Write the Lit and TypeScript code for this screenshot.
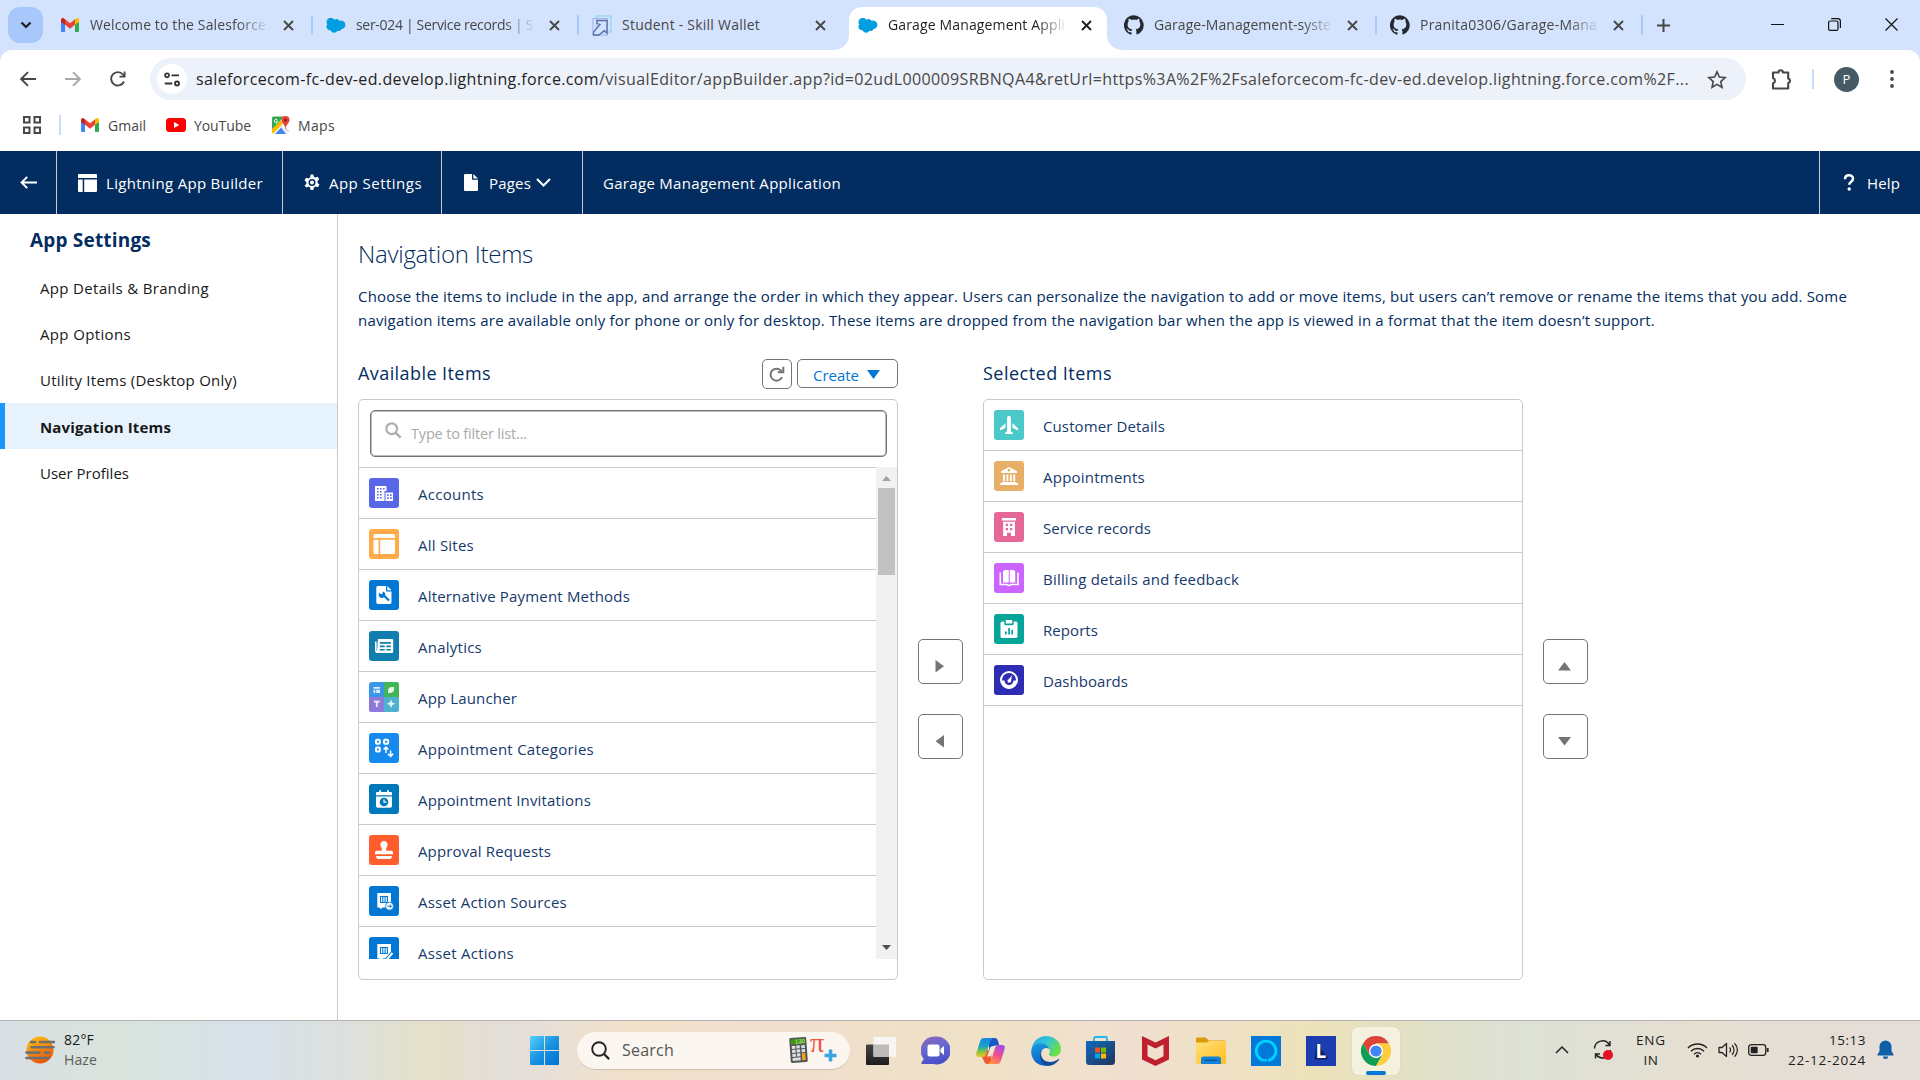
import { LitElement, html, css, svg, nothing } from "lit";
import { customElement } from "lit/decorators.js";

/* ---------- helpers ---------- */
const icon = (w: number, h: number, body: unknown, cls = "") =>
  html`<svg class="ic ${cls}" width=${w} height=${h} viewBox="0 0 ${w} ${h}">${body}</svg>`;

/* A text run; width is the advance the run should take, letter spacing follows from it. */
const run = (text: string, width: number, cls = "") =>
  html`<span class="run ${cls}" data-width=${width}>${text}</span>`;

/* ---------- brand marks ---------- */
const gmail = () => icon(18, 14, svg`
  <path fill="#4285f4" d="M0 3v9.800A1.200 1.200 0 0 0 1.200 14H4V5.500z"/>
  <path fill="#34a853" d="M14 14h2.800A1.200 1.200 0 0 0 18 12.800V3l-4 2.500z"/>
  <path fill="#ea4335" d="M4 6.800V1.300L9 5.200l5-3.900v5.500L9 10.700z"/>
  <path fill="#c5221f" d="M0 2.300V4L4 6.800V1.300L2.900.5C1.600-.5 0 .6 0 2.300z"/>
  <path fill="#fbbc04" d="M18 2.300V4l-4 2.800V1.300l1.100-.8C16.400-.5 18 .6 18 2.300z"/>`);

const cloud = () => icon(20, 15, svg`
  <path fill="#009ee0" d="M8.300 1.700A3.900 3.900 0 0 1 13.600 2.800 4.300 4.300 0 1 1 15.700 11.100 3.500 3.500 0 0 1 11.500 12.700 3.900 3.900 0 0 1 4.500 12.200 3.500 3.500 0 0 1 1.300 6.500 4.100 4.100 0 0 1 8.300 1.700z"/>`);

const wallet = () => icon(20, 21, svg`
  <rect x="4.500" y="1" width="14.500" height="16" fill="none" stroke="#8fdcf3" stroke-width="1.400"/>
  <rect x="1" y="3.500" width="14.500" height="16.500" fill="none" stroke="#9fb2ee" stroke-width="1"/>
  <path d="M5 5.500h10v12.500l-2.800-2.500L7 20H1.500v-3l6.500-7.500-3-1z" fill="#d3e3fd" stroke="#5a6aa3" stroke-width="1.300"/>`);

const github = () => icon(20, 20, svg`
  <path fill="#24292f" d="M10 .2a10 10 0 0 0-3.200 19.500c.5.1.7-.2.7-.5v-2c-2.600.5-3.300-.7-3.500-1.300-.1-.3-.6-1.200-1-1.500-.400-.2-.9-.7 0-.7.800 0 1.400.8 1.600 1.100.9 1.600 2.400 1.100 3 .9.1-.7.3-1.100.6-1.400-2.300-.3-4.600-1.100-4.600-5 0-1.100.4-2 1-2.700-.1-.3-.4-1.300.1-2.700 0 0 .8-.3 2.800 1a9.500 9.500 0 0 1 5 0c1.900-1.300 2.700-1 2.700-1 .6 1.400.2 2.400.1 2.700.6.7 1 1.600 1 2.700 0 3.900-2.300 4.700-4.600 5 .4.3.7.9.7 1.900v2.900c0 .3.200.6.700.5A10 10 0 0 0 10 .2z"/>`);

const cross = () => icon(11, 11, svg`<path d="M1 1l9 9M10 1l-9 9" stroke="currentColor" stroke-width="1.900" fill="none"/>`);

/* ---------- item tiles, drawn on a 30 x 30 square ---------- */
const asset = (extra: unknown) => svg`
  <path fill="#fff" d="M8.300 7h13.700v10l-5 4.500h-3.200L11.500 23l-1-1.500H8.300z"/>
  <path stroke="#0176d3" stroke-width="1.100" fill="none" d="M11.500 10.500v6M13.800 10.500v6M16.100 10.500v6M18.400 10.500v6M10.900 10.500h8.100M10.900 16.500h8.100"/>${extra}`;

const glyphs: Record<string, { bg: string; art: unknown }> = {
  account: { bg: "#5867e8", art: svg`
    <path fill="#fff" d="M6 8h11.500v5h-2v10H6zM16.500 14.500H24V23h-7.500z"/>
    <g fill="#5867e8"><path d="M8 10h1.600v1.600H8zM11 10h1.600v1.600H11zM14 10h1.600v1.600H14zM8 13h1.600v1.600H8zM11 13h1.600v1.600H11zM8 16h1.600v1.600H8zM11 16h1.600v1.600H11zM8 19h1.600v1.600H8zM11 19h1.600v1.600H11zM18 16.300h1.600v1.600H18zM21 16.300h1.600v1.600H21zM18 19.300h1.600v1.600H18zM21 19.300h1.600v1.600H21z"/></g>` },
  sites: { bg: "#ffab4a", art: svg`
    <path fill="#fff" d="M6 5h18.500A1.500 1.500 0 0 1 26 6.500V9H4.500V6.500A1.500 1.500 0 0 1 6 5zM4.500 10.700h5V25H6a1.500 1.500 0 0 1-1.500-1.500zM11.200 10.700H26v12.800a1.500 1.500 0 0 1-1.500 1.500H11.200z"/>` },
  payment: { bg: "#0176d3", art: svg`
    <path fill="#fff" d="M9 6h8v5.500h5.500V22A1.700 1.700 0 0 1 21 24H9a1.700 1.700 0 0 1-1.700-2V8A1.700 1.700 0 0 1 9 6zM18.300 6l4.200 4.200h-4.200z"/>
    <path fill="none" stroke="#0176d3" stroke-width="2.200" d="M14 14.500l6 6"/>
    <path fill="#0176d3" d="M10 12.600l2 1.600 1.500-.5.300-2.300a3.300 3.300 0 1 1-4 4z"/>` },
  analytics: { bg: "#117eaf", art: svg`
    <path fill="#fff" d="M9 8h14a1.200 1.200 0 0 1 1.200 1.200V20.500a1.500 1.500 0 0 1-1.500 1.500H8a2 2 0 0 1-2-2v-9.500h1.600V20H8z"/>
    <path fill="#117eaf" d="M10.800 11h11v1.700h-11zM10.800 14.500h5v1.700h-5zM17.300 14.500h4.500v1.700h-4.500zM10.800 17.900h5v1.500h-5zM17.300 17.900h4.500v1.500h-4.500z"/>` },
  launcher: { bg: "#3a96e8", art: svg`
    <path fill="#41b658" d="M15 0h15v15H15z"/><path fill="#8e78d8" d="M0 15h15v15H0z"/><path fill="#4fb1d0" d="M15 15h15v15H15z"/>
    <g fill="#fff" opacity=".85"><path d="M4.500 5h6.500v1.800H4.500zM4.500 7.700h1.800V11H4.500zM7.200 7.700H11V11H7.200z"/>
    <path d="M19 11V8a3.500 3.500 0 0 1 3-3h3v3a3.500 3.500 0 0 1-3 3z"/>
    <path d="M4.800 18.700h6v1.700h-2.100V25H6.900v-4.600H4.800zM22 17.500l1.300 2.900 2.900 1.300-2.900 1.300L22 25.900 20.700 23l-2.900-1.300 2.900-1.300z"/></g>` },
  categories: { bg: "#1589ee", art: svg`
    <g fill="none" stroke="#fff" stroke-width="2"><rect x="7" y="6.700" width="3.800" height="4" rx="1"/><rect x="15" y="6.700" width="4.200" height="4" rx="1"/><rect x="7" y="14.500" width="3.800" height="4" rx="1"/></g>
    <path fill="none" stroke="#fff" stroke-width="1.500" d="M17 20v-5.500M14.600 16.500L17 14l2.400 2.500M21.600 17.500V23M19 20.800l2.600 2.600 2.600-2.600"/>` },
  invitation: { bg: "#0079bc", art: svg`
    <path fill="#fff" d="M10.200 6.200h1.900v1.700h6V6.200H20v1.700h2A1 1 0 0 1 23 9v2.300H7V9a1 1 0 0 1 1-1.100h2.200zM7 12.500h16V22a1.800 1.800 0 0 1-1.800 1.800H8.800A1.800 1.800 0 0 1 7 22z"/>
    <circle cx="15" cy="18" r="4.300" fill="#0079bc"/><path d="M15 15.500v2.700h2.500" stroke="#fff" stroke-width="1.200" fill="none"/>` },
  approval: { bg: "#ff5d2d", art: svg`
    <path fill="#fff" d="M15 6a3.700 3.700 0 0 1 3 5.800c-.8 1.200-1 2.200-.8 4H22a2 2 0 0 1 2 2v1.400H6v-1.400a2 2 0 0 1 2-2h4.800c.2-1.800 0-2.800-.8-4A3.700 3.700 0 0 1 15 6zM7.200 21h15.600v1a2 2 0 0 1-2 2H9.200a2 2 0 0 1-2-2z"/>` },
  source: { bg: "#0176d3", art: asset(svg`<circle cx="20.500" cy="20.200" r="4" fill="#fff" stroke="#0176d3" stroke-width=".8"/><path d="M18.300 20.200h4M20.800 18.500l1.700 1.700-1.700 1.700" stroke="#0176d3" fill="none"/>`) },
  action: { bg: "#0176d3", art: asset(svg`<path d="M17 23.500l6.500-7.500" stroke="#0176d3" stroke-width="4"/><path d="M17 23.500l6.500-7.500" stroke="#fff" stroke-width="2"/>`) },
  plane: { bg: "#4bc8c8", art: svg`
    <path fill="#fff" d="M15 5.800c1.200 0 1.900 1.300 1.900 3v11.400c0 1.300.5 1.700 1.900 2.500V24h-7.600v-1.300c1.400-.8 1.900-1.200 1.900-2.500V8.800c0-1.700.7-3 1.900-3zM11.500 13.300v4.500L6 20.500v-2.300zM18.500 13.300v4.500l5.500 2.700v-2.300z"/>` },
  bank: { bg: "#e8af68", art: svg`
    <path fill="#fff" fill-rule="evenodd" d="M15 6l8 4.300v1.700H7v-1.700zM15 7.800a1.400 1.400 0 1 0 0 2.800 1.400 1.400 0 0 0 0-2.800z"/>
    <path fill="#fff" d="M9 13.500h1.900v6.700H9zM12.400 13.500h1.900v6.700h-1.900zM15.900 13.500h1.900v6.700h-1.900zM19.300 13.500h1.900v6.700h-1.900zM8 21h14.200v1H24v2H6.200v-2H8z"/>` },
  building: { bg: "#e56798", art: svg`
    <path fill="#fff" d="M8 6h14v2.500H8zM9.200 9.700H21V24h-4v-3.300h-4V24H9.200z"/>
    <path fill="#e56798" d="M11.700 11.800h2.300V14h-2.300zM16 11.800h2.300V14H16zM11.700 16h2.300v2.200h-2.300zM16 16h2.300v2.200H16z"/>` },
  book: { bg: "#cb65ff", art: svg`
    <path fill="#fff" d="M11 7h3.700v12.500H9V9a2 2 0 0 1 2-2zM15.700 7h3.500a2 2 0 0 1 2 2v10.500h-5.500z"/>
    <path fill="none" stroke="#fff" stroke-width="1.600" d="M6.300 9.500v12h6.800c.5 0 .7 1 1.900 1s1.400-1 1.900-1H24v-12"/>` },
  report: { bg: "#06a59a", art: svg`
    <path fill="#fff" d="M11.800 6h6.400v3.500h-6.400zM8 7.500h2.300V10a1.300 1.300 0 0 0 1.200 1.200h7A1.300 1.300 0 0 0 19.700 10V7.500H22A1.600 1.600 0 0 1 23.500 9v13.300A1.600 1.600 0 0 1 22 24H8a1.600 1.600 0 0 1-1.500-1.700V9A1.600 1.600 0 0 1 8 7.500z"/>
    <path fill="#06a59a" d="M11 17.500h1.700v3H11zM14.200 14h1.700v6.500h-1.700zM17.300 16h1.700v4.500h-1.700z"/>` },
  dashboard: { bg: "#2e2bb5", art: svg`
    <circle cx="15" cy="15" r="8" fill="none" stroke="#fff" stroke-width="2"/>
    <path fill="#fff" d="M7 15.500h3.500a4.500 4.500 0 0 0 9 0H23A8 8 0 0 1 7 15.500z"/>
    <path fill="#fff" stroke="#2e2bb5" stroke-width=".7" d="M18.500 9.500l-1.200 7.500a2.300 2.300 0 0 1-4.200-1.500z"/>` },
};

const tile = (name: string) => html`<svg class="tile" width="30" height="30" viewBox="0 0 30 30">
  <rect width="30" height="30" fill=${glyphs[name].bg}/>${glyphs[name].art}</svg>`;

/* ---------- data ---------- */
const available: [string, string, number][] = [
  ["account", "Accounts", 66], ["sites", "All Sites", 56], ["payment", "Alternative Payment Methods", 212],
  ["analytics", "Analytics", 64], ["launcher", "App Launcher", 99], ["categories", "Appointment Categories", 176],
  ["invitation", "Appointment Invitations", 173], ["approval", "Approval Requests", 133],
  ["source", "Asset Action Sources", 149], ["action", "Asset Actions", 96],
];
const selected: [string, string, number][] = [
  ["plane", "Customer Details", 122], ["bank", "Appointments", 102], ["building", "Service records", 108],
  ["book", "Billing details and feedback", 196], ["report", "Reports", 55], ["dashboard", "Dashboards", 85],
];
const sections: [string, number][] = [
  ["App Details & Branding", 169], ["App Options", 91], ["Utility Items (Desktop Only)", 197],
  ["Navigation Items", 131], ["User Profiles", 89],
];

/* ---------- taskbar marks ---------- */
const task = {
  start: () => icon(29, 29, svg`<defs>
    <linearGradient id="win" gradientUnits="userSpaceOnUse" x1="0" y1="0" x2="29" y2="29"><stop stop-color="#52d2ff"/><stop offset=".5" stop-color="#1a94e0"/><stop offset="1" stop-color="#0070d2"/></linearGradient></defs>
    <path fill="url(#win)" d="M1 0h13v14H0V1a1 1 0 0 1 1-1zM15 0h13a1 1 0 0 1 1 1v13H15zM0 15h14v14H1a1 1 0 0 1-1-1zM15 15h14v13a1 1 0 0 1-1 1H15z"/>`),
  view: () => icon(30, 28, svg`<defs><linearGradient id="tv" x1="0" y1="0" x2="0" y2="1"><stop stop-color="#444"/><stop offset="1" stop-color="#1d1d1d"/></linearGradient></defs>
    <rect y="7.500" width="23" height="20.500" rx="1" fill="url(#tv)"/><rect x="7.500" width="22.500" height="20" rx="1" fill="#f7f6f5"/><path d="M7.500 7.500H23V20H8.500a1 1 0 0 1-1-1z" fill="#bdbcbb"/>`),
  chat: () => icon(29, 29, svg`<defs><linearGradient id="ch" x1="0" y1="0" x2=".3" y2="1"><stop stop-color="#9067b8"/><stop offset=".5" stop-color="#6468d0"/><stop offset="1" stop-color="#4b50c8"/></linearGradient></defs>
    <path fill="url(#ch)" d="M15 .5a14 14 0 1 1-3 27.500H1.500c-1.300 0-1.500-1-.8-1.700l2-3.300A14 14 0 0 1 15 .5z"/><rect x="6.500" y="8.500" width="12" height="12" rx="2" fill="#fff"/><path fill="#fff" d="M19.500 13l3.500-3v9l-3.500-3z"/>`),
  copilot: () => icon(29, 28, svg`<defs>
    <linearGradient id="ca" x1="0" y1="0" x2="0" y2="1"><stop stop-color="#1688e8"/><stop offset=".45" stop-color="#1aa5c0"/><stop offset=".7" stop-color="#7cc34a"/><stop offset="1" stop-color="#f5c518"/></linearGradient>
    <linearGradient id="cb" x1=".7" y1="0" x2=".2" y2="1"><stop stop-color="#a64dea"/><stop offset=".5" stop-color="#f0508a"/><stop offset="1" stop-color="#ff9a3c"/></linearGradient></defs>
    <path fill="#1858c8" d="M12 1h6.500c2 0 3 1 3.500 3l1.300 4.500H20c-3 0-4.500 1-5.500 4l-1 3.500z"/>
    <path fill="url(#ca)" d="M8 1h9c-2 1-3 3-3.500 5L10 17c-.6 2-1.500 3-3.500 3h-4C.5 20-.2 18 .4 16L4 4.500C4.700 2 6 1 8 1z"/>
    <path fill="#ee5a30" d="M6 20c2.500 0 3.500-1 4-3l1.500-4.500 3.500 3L16 27h-4.500c-2 0-3-1-3.500-3z"/>
    <path fill="url(#cb)" d="M21 27h-9c2-1 3-3 3.500-5L19 11c.6-2 1.500-3 3.500-3h4c2 0 2.700 2 2.100 4L25 23.500C24.300 26 23 27 21 27z"/>
    <path fill="#f3e6d6" d="M15.500 9.500h3.200c-.8.800-1.200 1.600-1.500 2.700l-1.700 5.300c-.6 1.500-1.300 2-2.600 2h-2.200c.7-.6 1-1.300 1.300-2.200l1.700-5.400c.4-1.400.9-2 1.800-2.400z"/>`),
  edge: () => icon(30, 30, svg`<defs>
    <linearGradient id="ea" x1="0" y1="0" x2="1" y2=".5"><stop stop-color="#2aa8e0"/><stop offset=".5" stop-color="#30c3d8"/><stop offset="1" stop-color="#6be04a"/></linearGradient>
    <linearGradient id="eb" x1="0" y1="0" x2=".3" y2="1"><stop stop-color="#1b9de2"/><stop offset="1" stop-color="#0c62c4"/></linearGradient></defs>
    <path fill="url(#ea)" d="M.6 13C2 5 8 0 15 0c8.500 0 15 6 15 13 0 5-3.500 7.500-7.500 7.500-3.500 0-5-1.500-4.500-2.500 2-2.500 1-7-3.500-8C9 9 3.500 11 .6 13z"/>
    <path fill="url(#eb)" d="M.2 16C0 10 5 7.500 9.500 7.500c5 0 8 3 9 5.500-3-2-7-1-8.500 3-1.500 5 2 11 7 13.500C8 31 .6 25 .2 16z"/>
    <path fill="#114a9a" d="M11.500 13.500c-2.500 3-1.500 8 1.500 10.500 4 3 10 2.500 14-.7.800-.6 1.400.1.9.8C25 28 21 30 17 30 10 29 6.500 18 11.500 13.500z"/>`),
  store: () => icon(29, 29, svg`<defs><linearGradient id="st" x1="0" y1="0" x2="1" y2="1"><stop stop-color="#0f6cbd"/><stop offset="1" stop-color="#22335c"/></linearGradient></defs>
    <path d="M8 6V2.500A1.500 1.500 0 0 1 9.500 1h10A1.500 1.500 0 0 1 21 2.500V6" fill="none" stroke="#22b5f0" stroke-width="1.800"/>
    <path fill="url(#st)" d="M0 5h29v20.500a3.500 3.500 0 0 1-3.500 3.500h-22A3.500 3.500 0 0 1 0 25.500z"/>
    <path fill="#f25022" d="M9 11.500h5v5H9z"/><path fill="#7fba00" d="M15 11.500h5v5h-5z"/><path fill="#00a4ef" d="M9 17.500h5v5H9z"/><path fill="#ffb900" d="M15 17.500h5v5h-5z"/>`),
  mcafee: () => icon(27, 30, svg`<path fill="#c01f2e" fill-rule="evenodd" d="M0 0l13.500 6.500L27 0v23.500L13.500 30 0 23.500zM5.500 8.500v11.800l8 4 8-4V8.500l-8 4z"/>`),
  files: () => icon(30, 27, svg`<defs><linearGradient id="fo" x1="0" y1="0" x2="1" y2="1"><stop stop-color="#ffe07a"/><stop offset="1" stop-color="#ffbe1e"/></linearGradient></defs>
    <path fill="#dc9a08" d="M0 2A1.500 1.500 0 0 1 1.500.500h8L13 3.500h15.500A1.500 1.500 0 0 1 30 5v2H0z"/><path fill="url(#fo)" d="M0 5.500h10.500L13 4h17v21.500A1.500 1.500 0 0 1 28.500 27h-27A1.500 1.500 0 0 1 0 25.500z"/>
    <path fill="#1282d6" d="M5 27v-5a2.500 2.500 0 0 1 2.500-2.500h15A2.500 2.500 0 0 1 25 22v5z"/><path d="M8.500 23.300h13" stroke="#0b5394" stroke-width="1.200"/>`),
  alexa: () => icon(30, 30, svg`<path fill="#0079d8" d="M0 0h30v30H0z"/><path fill="none" stroke="#00d2ff" stroke-width="2.800" d="M13.200 24.500A9.800 9.800 0 1 1 17 24.500"/><path fill="#00d2ff" d="M12 23.200h4.500l-1.700 3z"/>`),
  letter: () => icon(30, 30, svg`<path fill="#1c3db0" d="M0 0h30v30H0z"/><path fill="#0d1f66" d="M10.500 8L8.500 23.500h12.500l1-2z"/><text x="9.600" y="21.800" class="logo-letter">L</text>`),
  chrome: () => icon(30, 30, svg`<path fill="#db4437" d="M2 7.500A15 15 0 0 1 28 7.500H15L8.500 18.700z"/>
    <path fill="#0f9d58" d="M2 7.500A15 15 0 0 0 15 30l6.500-11.200L15 22l-6.500-3.300z"/><path fill="#ffcd40" d="M28 7.500A15 15 0 0 1 15 30l6.500-11.300L15 7.500z"/>
    <circle cx="15" cy="15" r="7" fill="#fff"/><circle cx="15" cy="15" r="5.600" fill="#4285f4"/>`),
};

@customElement("app-root")
export class AppRoot extends LitElement {
  static styles = css`
    :host { display: block; width: 1920px; height: 1080px; overflow: hidden; background: #fff;
      font-family: "Open Sans", "Noto Sans", sans-serif; font-size: 15px; color: #181818; }
    * { box-sizing: border-box; }
    .screen { display: flex; flex-direction: column; width: 1920px; height: 1080px; }
    .ic, .tile { display: block; flex: none; }
    .run { display: inline-block; white-space: pre; flex: none; }

    .tabs { display: flex; height: 50px; background: #d3e3fd; padding-left: 8px; flex: none; color: #474747; font-size: 14px; }
    .tabmenu { width: 35px; height: 36px; margin: 7px 9px 0 0; border-radius: 12px; background: #a8c7fa; display: grid; place-items: center; color: #1f1f1f; }
    .tab { display: flex; align-items: center; width: 266px; height: 50px; padding-left: 8px; flex: none; }
    .tab .mark { width: 20px; display: grid; place-items: center; margin-right: 10px; }
    .title { width: 177px; overflow: hidden; margin-right: 16px; line-height: 24px; }
    .title.fade { -webkit-mask-image: linear-gradient(90deg, #000 148px, transparent 180px); mask-image: linear-gradient(90deg, #000 148px, transparent 180px); }
    .tab .sep { width: 2px; height: 20px; background: #a8c7fa; margin: 0 5px 0 auto; border-radius: 1px; }
    .tab.active { color: #1f1f1f; position: relative; }
    .tab.active .shape { position: absolute; left: -16px; top: 7px; }
    .tab.active > :not(.shape) { position: relative; }
    .newtab { margin: 19px 0 0 9px; color: #474747; }
    .win { margin-left: auto; display: flex; align-items: center; gap: 44px; padding-right: 22px; height: 48px; color: #111; }

    .chrome { background: #d3e3fd; flex: none; height: 101px; }
    .chromein { background: #fff; border-radius: 12px 12px 0 0; height: 101px; }
    .toolbar { display: flex; align-items: center; height: 58px; padding-left: 20px; color: #474747; }
    .toolbar .nav { display: flex; gap: 29px; width: 130px; }
    .omni { display: flex; align-items: center; width: 1596px; height: 42px; border-radius: 21px; background: #ecf1fa; padding-left: 7px; font-size: 16px; flex: none; }
    .site { width: 30px; height: 30px; border-radius: 50%; background: #fff; display: grid; place-items: center; margin-right: 9px; }
    .host { color: #1f1f1f; }
    .star { margin-left: 18px; }
    .ext { margin-left: 25px; }
    .vsep { width: 2px; height: 20px; background: #c9dcfb; flex: none; }
    .toolbar .vsep { margin-left: 20px; }
    .avatar { width: 25px; height: 25px; border-radius: 50%; background: #455a64; color: #fff; font-size: 13px; line-height: 25px; text-align: center; margin: 0 31px 0 20px; }
    .marks { display: flex; align-items: center; height: 34px; padding-left: 23px; color: #474747; font-size: 14px; }
    .marks .vsep { margin: 0 20px 0 18px; }
    .m-gmail { margin: 0 20px 0 9px; }
    .m-yt { margin: 0 21px 0 8px; }
    .m-maps { margin-left: 8px; }

    .appbar { display: flex; height: 63px; background: #032d60; color: #fff; flex: none; }
    .cell { display: flex; align-items: center; border-right: 1px solid #c9c9c9; height: 63px; }
    .cell.c1 { width: 57px; padding-left: 20px; }
    .cell.c2 { width: 226px; padding-left: 21px; gap: 9px; }
    .cell.c3 { width: 159px; padding-left: 21px; gap: 9px; }
    .cell.c4 { width: 141px; padding-left: 22px; gap: 11px; }
    .cell.c4 .chev { margin-left: -6px; }
    .cell.c5 { flex: 1; padding-left: 20px; }
    .cell.c6 { width: 100px; border: 0; padding-left: 23px; gap: 12px; }

    .body { display: flex; height: 806px; flex: none; }
    .side { width: 338px; border-right: 1px solid #c9c9c9; flex: none; }
    .side h2 { margin: 0; font-size: 19px; line-height: 26px; padding: 13px 0 13px 30px; height: 51px; color: #032d60; }
    .side .item { height: 46px; padding-left: 40px; line-height: 46px; }
    .side .item.on { font-weight: 700; background: #e6f3fd; padding-left: 35px; border-left: 5px solid #1b96ff; }
    .side .item.on, .side .item.on ~ .item { line-height: 48px; }
    .main { flex: 1; padding: 22px 0 0 20px; color: #032d60; }
    .main h1 { margin: 0; font-weight: 300; font-size: 24px; line-height: 36px; height: 48px; }
    .desc { line-height: 24px; display: flex; flex-direction: column; align-items: flex-start; height: 61px; }
    .cols { display: flex; }
    .col { width: 540px; }
    .head { display: flex; height: 54px; padding-top: 14px; align-items: flex-start; font-size: 18px; line-height: 28px; }
    .head .btns { margin-left: auto; display: flex; gap: 5px; font-size: 15px; }
    .sq { display: grid; place-items: center; border: 1px solid #747474; border-radius: 5px; background: #fff; color: #747474; }
    .refresh { width: 30px; height: 30px; }
    .create { display: flex; align-items: center; gap: 8px; width: 101px; height: 29px; padding: 2px 0 0 15px; border: 1px solid #747474; border-radius: 5px; color: #0176d3; line-height: 26px; }
    .box { height: 581px; border: 1px solid #c9c9c9; border-radius: 5px; overflow: hidden; }
    .filter { height: 67px; padding: 10px 10px 10px 11px; }
    .input { display: flex; align-items: center; height: 47px; border: 1px solid #747474; box-shadow: 0 0 0 1px #bdbdbd inset; border-radius: 5px; padding: 0 0 0 14px; color: #aaa; font-size: 14.500px; }
    .input .ic { margin: -7px 9px 0 0; }
    .list { display: flex; height: 492px; overflow: hidden; }
    .rows { flex: 1; }
    .row { display: flex; align-items: center; height: 51px; gap: 19px; color: #16396c; }
    .rows .row { border-top: 1px solid #c9c9c9; padding: 0 0 0 10px; }
    .picked .row { border-bottom: 1px solid #c9c9c9; padding: 0 0 0 10px; }
    .row .run { padding-top: 2px; }
    .tile { border-radius: 3px; }
    .scroll { width: 21px; background: #f1f1f1; display: flex; flex-direction: column; align-items: center; padding: 9px 0 9px; }
    .thumb { width: 17px; height: 87px; background: #c1c1c1; margin: 7px 0 auto; }
    .pair { display: flex; flex-direction: column; gap: 30px; padding: 294px 0 0 20px; width: 85px; flex: none; }
    .pair .sq { width: 45px; height: 45px; padding: 9px 2px 0 0; }

    .taskbar { display: flex; height: 60px; flex: none; border-top: 1px solid #b5b3af; padding-left: 25px; align-items: center;
      background: linear-gradient(90deg, #d9dfe4 0, #d9e3dc 110px, #d7e1ea 250px, #dde0dc 350px, #e4e0c9 430px, #e3dedb 510px, #f0e1cc 620px, #f0dfcd 800px, #efe2c6 980px, #f0dfd0 1130px, #ece2b9 1320px, #e2e1c6 1410px, #dde1d6 1520px, #e6dfd2 1700px, #e5ddd8 1920px); }
    .weather { display: flex; gap: 9px; width: 505px; font-size: 14px; line-height: 20px; align-items: center; padding-bottom: 2px; }
    .weather .run { display: block; width: max-content; }
    .muted { color: #5c5c5c; }
    .find { display: flex; align-items: center; width: 273px; height: 38px; border-radius: 19px; background: #fbf6f0; margin: 0 3px 0 18px; padding-left: 14px; border-bottom: 1px solid #cdbfae; font-size: 16px; color: #555; }
    .find .run { margin: 0 115px 0 12px; }
    .find .ic { overflow: visible; }
    .slot { width: 55px; height: 48px; display: grid; place-items: center; flex: none; }
    .slot.open { width: 48px; margin: 0 3px 0 4px; background: #f4f1df; border-radius: 6px; position: relative; box-shadow: 0 0 1px #bbb; }
    .slot.open .bar { position: absolute; left: 14px; bottom: 0; width: 20px; height: 4px; border-radius: 2px; background: #0078d4; }
    .tray { display: flex; align-items: center; margin-left: auto; padding: 0 26px 2px 0; font-size: 13.500px; line-height: 20px; color: #1c1c1c; }
    .stack { display: flex; flex-direction: column; }
    .stack.mid { align-items: center; margin: 0 21px 0 22px; }
    .stack.end { align-items: flex-end; margin: 0 11px 0 19px; }
    .sync { margin-left: 23px; }
    .spk { margin-left: 10px; }
    .bat { margin-left: 10px; }
    .logo-letter { font: 700 19px "Open Sans", sans-serif; fill: #fff; }
    .pi { font: 28px "Liberation Serif", serif; fill: #ee5548; }
    .digits { font: 6px "Liberation Sans", sans-serif; fill: #cfe8a8; }
  `;

  firstUpdated() {
    this.renderRoot.querySelectorAll<HTMLElement>(".run").forEach((el) => {
      const want = Number(el.dataset.width);
      const natural = el.getBoundingClientRect().width;
      el.style.letterSpacing = `${(want - natural) / (el.textContent ?? " ").length}px`;
    });
  }

  tab(mark: unknown, text: string, width: number, sep = true, fade = true) {
    return html`<div class="tab"><span class="mark">${mark}</span>
      <div class="title ${fade ? "fade" : ""}">${run(text, width)}</div>${cross()}
      ${sep ? html`<span class="sep"></span>` : nothing}</div>`;
  }

  browser() {
    return html`
      <div class="tabs">
        <div class="tabmenu">${icon(12, 8, svg`<path d="M1.500 1.500L6 6l4.500-4.500" stroke="currentColor" stroke-width="2.200" fill="none"/>`)}</div>
        ${this.tab(gmail(), "Welcome to the Salesforce", 176)}
        ${this.tab(cloud(), "ser-024 | Service records | S", 177)}
        ${this.tab(wallet(), "Student - Skill Wallet", 138, false, false)}
        <div class="tab active">
          <svg class="shape" width="288" height="43" viewBox="0 0 288 43"><path fill="#fff" d="M0 43a15 15 0 0 0 15-15V13A13 13 0 0 1 28 0h232a13 13 0 0 1 13 13v15a15 15 0 0 0 15 15z"/></svg>
          <span class="mark">${cloud()}</span><div class="title fade">${run("Garage Management Appli", 177)}</div>${cross()}
        </div>
        ${this.tab(github(), "Garage-Management-syste", 177)}
        ${this.tab(github(), "Pranita0306/Garage-Mana", 177)}
        <span class="newtab">${icon(13, 13, svg`<path d="M6.500 0v13M0 6.500h13" stroke="currentColor" stroke-width="2"/>`)}</span>
        <div class="win">
          ${icon(13, 13, svg`<path d="M0 6.500h13" stroke="currentColor"/>`)}
          ${icon(13, 13, svg`<rect x=".6" y="3" width="9.400" height="9.400" rx="1.500" fill="none" stroke="currentColor" stroke-width="1.200"/><path d="M3.200.700h6.500a2.700 2.700 0 0 1 2.700 2.700V10" fill="none" stroke="currentColor" stroke-width="1.200"/>`)}
          ${icon(13, 13, svg`<path d="M.5.500l12 12M12.500.500l-12 12" stroke="currentColor" stroke-width="1.200"/>`)}
        </div>
      </div>
      <div class="chrome"><div class="chromein">
        <div class="toolbar">
          <div class="nav">
            ${icon(16, 16, svg`<path d="M16 8H1.500M8 1.200L1.200 8 8 14.800" stroke="currentColor" stroke-width="1.900" fill="none"/>`)}
            ${icon(16, 16, svg`<path d="M0 8h14.500M8 1.200L14.800 8 8 14.800" stroke="#a8a8a8" stroke-width="1.900" fill="none"/>`)}
            ${icon(16, 16, svg`<path d="M14 10.500A6.700 6.700 0 1 1 13 3.500L14.500 5.200" stroke="currentColor" stroke-width="1.900" fill="none"/><path d="M15.500.500v6h-6V4.700h4.200V.500z" fill="currentColor"/>`)}
          </div>
          <div class="omni">
            <span class="site">${icon(16, 15, svg`<g fill="none" stroke="#333" stroke-width="1.800"><circle cx="3" cy="3.300" r="2"/><path d="M7.500 3.300H15M.800 11.500h7.500"/><circle cx="13" cy="11.500" r="2"/></g>`)}</span>
            ${run("saleforcecom-fc-dev-ed.develop.lightning.force.com", 403, "host")}
            ${run("/visualEditor/appBuilder.app?id=02udL000009SRBNQA4&retUrl=https%3A%2F%2Fsaleforcecom-fc-dev-ed.develop.lightning.force.com%2F...", 1090)}
            <span class="star">${icon(20, 19, svg`<path d="M10 1.800l2.400 5.300 5.700.6-4.300 3.900 1.200 5.700-5-2.900-5 2.900 1.200-5.700L1.900 7.700l5.700-.6z" stroke="currentColor" stroke-width="1.600" fill="none"/>`)}</span>
          </div>
          <span class="ext">${icon(21, 22, svg`<path d="M2 4.500h5.500a2.200 2.200 0 0 1 4.400 0h5.300v6a2.300 2.300 0 0 1 0 4.500v5.500H2v-5a2.900 2.900 0 0 0 0-5.500z" stroke="currentColor" stroke-width="2.100" fill="none" stroke-linejoin="round"/>`)}</span>
          <span class="vsep"></span>
          <span class="avatar">P</span>
          ${icon(4, 18, svg`<g fill="currentColor"><circle cx="2" cy="2" r="1.900"/><circle cx="2" cy="9" r="1.900"/><circle cx="2" cy="16" r="1.900"/></g>`)}
        </div>
        <div class="marks">
          ${icon(18, 18, svg`<g fill="none" stroke="#474747" stroke-width="2"><path d="M1 1h5.500v5.500H1zM11.500 1H17v5.500h-5.500zM1 11.500h5.500V17H1zM11.500 11.500H17V17h-5.500z"/></g>`)}
          <span class="vsep"></span>${gmail()}
          ${run("Gmail", 38, "m-gmail")}
          ${icon(20, 14, svg`<rect width="20" height="14" rx="3.500" fill="#f00"/><path fill="#fff" d="M8 4l5.300 3L8 10z"/>`)}
          ${run("YouTube", 57, "m-yt")}
          ${icon(18, 18, svg`<path fill="#34a853" d="M0 2a1.500 1.500 0 0 1 1.500-1.500H12L0 14z"/><path fill="#e8eaed" d="M9 8l7 9-1.500 1H14L8 11z"/><path fill="#4285f4" d="M3 18l6-6.500 5 6.500z"/><path fill="#fbbc04" d="M0 13l9-9 1.500 4L1.500 17.700A1.500 1.500 0 0 1 0 16.300z"/><path fill="#bdc1c6" d="M13 11l4 4v1l-4-3z"/><path fill="#ea4335" d="M13.500 0A4 4 0 0 1 17.500 4c0 3-3.500 4.500-4 9-.5-4.500-4-6-4-9a4 4 0 0 1 4-4z"/><circle cx="13.500" cy="4" r="1.500" fill="#8c1d18"/><path d="M5.200 3.800A1.700 1.700 0 1 0 5.700 5.200H4.200" fill="none" stroke="#fff"/>`)}
          ${run("Maps", 37, "m-maps")}
        </div>
      </div></div>`;
  }

  appbar() {
    return html`<div class="appbar">
      <div class="cell c1">${icon(17, 13, svg`<path d="M17 6.500H2M7.200.900L1.600 6.500l5.600 5.600" stroke="#fff" stroke-width="2" fill="none"/>`)}</div>
      <div class="cell c2">${icon(19, 18, svg`<path fill="#fff" d="M1 0h17a1 1 0 0 1 1 1v3H0V1a1 1 0 0 1 1-1zM0 5.500h4.700V18H1a1 1 0 0 1-1-1zM6.200 5.500H19V17a1 1 0 0 1-1 1H6.200z"/>`)}${run("Lightning App Builder", 157)}</div>
      <div class="cell c3">${icon(16, 17, svg`<path fill="#fff" fill-rule="evenodd" d="M6.700.500h2.600l.5 2.300 1.500.8 2.300-.8 1.600 2.500-1.700 1.700.1 2 1.900 1.600-1.600 2.700-2.300-.8-1.700.9-.6 2.600H6.700l-.6-2.600-1.500-.8-2.400.8L.600 11.500 2.400 9.900l-.1-2L.500 6.200 2.100 3.700l2.400.8 1.600-.9zM8 4.900a3.500 3.500 0 1 0 0 7 3.500 3.500 0 0 0 0-7z"/><circle cx="8" cy="8.400" r="2" fill="#fff"/>`)}${run("App Settings", 93)}</div>
      <div class="cell c4">${icon(14, 17, svg`<path fill="#fff" d="M1.200 0H8v5.800h6V15.500A1.300 1.300 0 0 1 12.700 17H1.300A1.300 1.300 0 0 1 0 15.500V1.300A1.300 1.300 0 0 1 1.200 0zM9.300 0L14 4.600H9.300z"/>`)}${run("Pages", 42)}${icon(15, 9, svg`<path d="M1 1l6.500 6.500L14 1" stroke="#fff" stroke-width="2" fill="none"/>`, "chev")}</div>
      <div class="cell c5">${run("Garage Management Application", 238)}</div>
      <div class="cell c6">${icon(12, 17, svg`<path d="M2 5.200C2 2.700 3.800 1.300 6 1.300s4 1.500 4 3.500c0 3-3.800 3-3.800 6" stroke="#fff" stroke-width="2.500" fill="none"/><circle cx="6.200" cy="15" r="1.700" fill="#fff"/>`)}${run("Help", 33)}</div>
    </div>`;
  }

  row([mark, text, width]: [string, string, number]) {
    return html`<div class="row">${tile(mark)}${run(text, width)}</div>`;
  }

  arrow(dir: string) {
    const shapes: Record<string, string> = {
      right: "M2.500 0v12.500L11 6.200z", left: "M11 0v12.500L2.500 6.200z",
      up: "M0 10.500h13L6.500 2z", down: "M0 2h13L6.500 10.500z",
    };
    return html`<div class="sq">${icon(13, 13, svg`<path fill="#747474" d=${shapes[dir]}/>`)}</div>`;
  }

  content() {
    return html`<div class="body">
      <div class="side">
        <h2>${run("App Settings", 121)}</h2>
        ${sections.map(([name, w]) => html`<div class="item ${name === "Navigation Items" ? "on" : ""}">${run(name, w)}</div>`)}
      </div>
      <div class="main">
        <h1>${run("Navigation Items", 175)}</h1>
        <div class="desc">
          ${run("Choose the items to include in the app, and arrange the order in which they appear. Users can personalize the navigation to add or move items, but users can’t remove or rename the items that you add. Some", 1489)}
          ${run("navigation items are available only for phone or only for desktop. These items are dropped from the navigation bar when the app is viewed in a format that the item doesn’t support.", 1297)}
        </div>
        <div class="cols">
          <div class="col">
            <div class="head">${run("Available Items", 133)}
              <div class="btns">
                <div class="sq refresh">${icon(16, 16, svg`<path d="M13 11.200A6 6 0 1 1 11.800 4.400L13 5.600" stroke="currentColor" stroke-width="2" fill="none"/><path d="M15.300.800v6.500H8.800V5.200h4.500V.800z" fill="currentColor"/>`)}</div>
                <div class="create">${run("Create", 46)}${icon(13, 9, svg`<path fill="#0176d3" d="M0 0h13L6.500 9z"/>`)}</div>
              </div>
            </div>
            <div class="box">
              <div class="filter"><div class="input">${icon(17, 17, svg`<circle cx="6.700" cy="6.700" r="5.400" fill="none" stroke="#aeaeae" stroke-width="2.200"/><path d="M10.600 10.600l5 5" stroke="#aeaeae" stroke-width="2.600"/>`)}${run("Type to filter list...", 116)}</div></div>
              <div class="list">
                <div class="rows">${available.map((r) => this.row(r))}</div>
                <div class="scroll">${icon(9, 5, svg`<path fill="#a3a3a3" d="M0 5h9L4.500 0z"/>`)}<div class="thumb"></div>${icon(9, 5, svg`<path fill="#505050" d="M0 0h9L4.500 5z"/>`)}</div>
              </div>
            </div>
          </div>
          <div class="pair">${this.arrow("right")}${this.arrow("left")}</div>
          <div class="col">
            <div class="head">${run("Selected Items", 129)}</div>
            <div class="box picked">${selected.map((r) => this.row(r))}</div>
          </div>
          <div class="pair">${this.arrow("up")}${this.arrow("down")}</div>
        </div>
      </div>
    </div>`;
  }

  taskbar() {
    return html`<div class="taskbar">
      <div class="weather">
        ${icon(30, 28, svg`<defs><linearGradient id="su" x1="0" y1="0" x2=".5" y2="1"><stop stop-color="#ffc814"/><stop offset="1" stop-color="#e8590c"/></linearGradient></defs><circle cx="15" cy="14" r="13.500" fill="url(#su)"/><path d="M6 6h4M15 6h14M6.500 11.300h22M1.500 16.600h13M20 16.600h4M1.500 22h22" stroke="#6f6f6f" stroke-width="2.600" stroke-linecap="round"/>`)}
        <div>${run("82°F", 30)}${run("Haze", 33, "muted")}</div>
      </div>
      ${task.start()}
      <div class="find">
        ${icon(19, 19, svg`<circle cx="8" cy="8" r="6.800" fill="none" stroke="#222" stroke-width="1.900"/><path d="M12.800 12.800l5.300 5.300" stroke="#222" stroke-width="2.200"/>`)}
        ${run("Search", 52)}
        ${icon(49, 28, svg`<g transform="rotate(-4 9 14)"><rect x="1" y="1.500" width="17" height="25" rx="1.500" fill="#555"/><path fill="#3f9a12" d="M2.500 3h14v5h-14z"/><text x="6.500" y="7.600" class="digits">130</text><g fill="#d9e0e6"><path d="M3 9.500h3.500v3H3zM7.500 9.500H11v3H7.500zM12.500 9.500H16v3h-3.500zM3 13.500h3.500v3H3zM7.500 13.500H11v3H7.500zM12.500 13.500H16v3h-3.500zM3 17.500h3.500v3H3zM7.500 17.500H11v3H7.500zM3 21.500h8v3H3z"/></g><path fill="#f0a020" d="M12.500 17.500H16v7h-3.500z"/></g><text x="21" y="15.500" class="pi">π</text><path d="M41.500 13.500v12M35.500 19.500h12" stroke="#3aa5e4" stroke-width="3.500"/>`)}
      </div>
      ${[task.view, task.chat, task.copilot, task.edge, task.store, task.mcafee, task.files, task.alexa, task.letter].map((f) => html`<div class="slot">${f()}</div>`)}
      <div class="slot open">${task.chrome()}<span class="bar"></span></div>
      <div class="tray">
        ${icon(14, 9, svg`<path d="M1 8l6-6 6 6" stroke="#222" stroke-width="1.500" fill="none"/>`)}
        ${icon(22, 22, svg`<path d="M2.500 9.500A8 8 0 0 1 17.500 6M18 2v4.500h-4.500M18.500 11A8 8 0 0 1 4 15.500M3.500 19.500V15H8" stroke="#222" stroke-width="1.400" fill="none"/><circle cx="16" cy="16" r="5" fill="#e81123"/>`, "sync")}
        <div class="stack mid">${run("ENG", 30)}${run("IN", 15)}</div>
        ${icon(21, 16, svg`<g fill="none" stroke="#222" stroke-width="1.500"><path d="M1 6a13.500 13.500 0 0 1 19 0M4 9.200a9.300 9.300 0 0 1 13 0M7 12.200a5 5 0 0 1 7 0"/></g><circle cx="10.500" cy="14" r="1.600" fill="#222"/>`)}
        ${icon(20, 16, svg`<path d="M1 5.500h3L8.500 1.500v13L4 10.500H1z" fill="none" stroke="#222" stroke-width="1.300" stroke-linejoin="round"/><path d="M11.500 5.500a3.500 3.500 0 0 1 0 5M14 3.300a6.500 6.500 0 0 1 0 9.400M16.500 1.200a9.500 9.500 0 0 1 0 13.600" fill="none" stroke="#222" stroke-width="1.200"/>`, "spk")}
        ${icon(21, 12, svg`<rect x=".7" y=".7" width="17" height="10.600" rx="2.500" fill="none" stroke="#222" stroke-width="1.300"/><rect x="2.700" y="2.700" width="7" height="6.600" rx="1" fill="#222"/><path d="M19.700 4v4" stroke="#222" stroke-width="1.800"/>`, "bat")}
        <div class="stack end">${run("15:13", 37)}${run("22-12-2024", 78)}</div>
        ${icon(17, 19, svg`<path fill="#0f5fa8" d="M8.500.5a6 6 0 0 1 6 6v4.500l2 3.500v1H.500v-1l2-3.500V6.500a6 6 0 0 1 6-6zM6 16.500h5a2.500 2.500 0 0 1-5 0z"/>`)}
      </div>
    </div>`;
  }

  render() {
    return html`<div class="screen">${this.browser()}${this.appbar()}${this.content()}${this.taskbar()}</div>`;
  }
}
